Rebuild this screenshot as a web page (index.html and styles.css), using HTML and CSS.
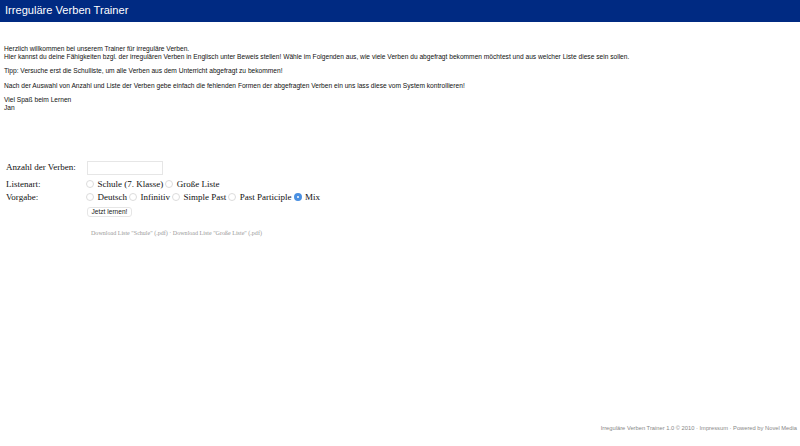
FILE: index.html
```html
<!DOCTYPE html>
<html lang="de">
<head>
    <meta charset="UTF-8">
    <title>Irreguläre Verben Trainer</title>
    <link rel="stylesheet" href="styles.css">
</head>
<body>
    <div class="header">Irreguläre Verben Trainer</div>
    <div class="intro">
        <p>Herzlich willkommen bei unserem Trainer für irreguläre Verben.<br>
        Hier kannst du deine Fähigkeiten bzgl. der irregulären Verben in Englisch unter Beweis stellen! Wähle im Folgenden aus, wie viele Verben du abgefragt bekommen möchtest und aus welcher Liste diese sein sollen.</p>
        <p>Tipp: Versuche erst die Schulliste, um alle Verben aus dem Unterricht abgefragt zu bekommen!</p>
        <p>Nach der Auswahl von Anzahl und Liste der Verben gebe einfach die fehlenden Formen der abgefragten Verben ein uns lass diese vom System kontrollieren!</p>
        <p>Viel Spaß beim Lernen<br>
        Jan</p>
    </div>
    <form class="trainer">
        <label class="count-label" for="count">Anzahl der Verben:</label>
        <div class="count-row">
            <input class="count-input" type="text" id="count">
        </div>

        <span class="field-label">Listenart:</span>
        <div class="options">
            <span class="radio"></span><span class="option">Schule (7. Klasse)</span>
            <span class="radio"></span><span class="option">Große Liste</span>
        </div>

        <span class="field-label">Vorgabe:</span>
        <div class="options">
            <span class="radio"></span><span class="option">Deutsch</span>
            <span class="radio"></span><span class="option">Infinitiv</span>
            <span class="radio"></span><span class="option">Simple Past</span>
            <span class="radio"></span><span class="option">Past Participle</span>
            <span class="radio checked"></span><span class="option">Mix</span>
        </div>

        <div class="actions">
            <button class="submit" type="button">Jetzt lernen!</button>
            <div class="downloads">Download Liste "Schule" (.pdf) · Download Liste "Große Liste" (.pdf)</div>
        </div>
    </form>
    <div class="footer">Irreguläre Verben Trainer 1.0 © 2010 · Impressum · Powered by Novel Media</div>
</body>
</html>
```

FILE: styles.css
```css
html, body {
    height: 100%;
}

body {
    display: flex;
    flex-direction: column;
    margin: 0;
    background: #ffffff;
    color: #111111;
    font-family: "Liberation Sans", Arial, sans-serif;
    font-size: 6.64px;
}

.header {
    flex: none;
    height: 22px;
    padding-left: 5px;
    background: #002a82;
    color: #ffffff;
    font-size: 11.1px;
    line-height: 20px;
}

.intro {
    padding: 23px 4px 0;
    line-height: 7.5px;
}

.intro p {
    margin: 0 0 7px;
}

.trainer {
    display: grid;
    grid-template-columns: 81px 1fr;
    align-items: center;
    margin-top: 41px;
    padding-left: 6px;
    color: #111111;
    font-family: "Liberation Serif", "Times New Roman", serif;
    font-size: 9px;
}

.count-label {
    padding-bottom: 2px;
}

.count-row {
    height: 18px;
}

.count-input {
    display: block;
    box-sizing: border-box;
    width: 76px;
    height: 14px;
    margin: 2px 0 0;
    padding: 0;
    border: 1px solid #e6e6e6;
    background: #ffffff;
}

.options {
    display: flex;
    align-items: center;
    height: 13px;
}

.radio {
    box-sizing: border-box;
    width: 8px;
    height: 8px;
    margin-left: -1px;
    margin-right: 3.5px;
    border: 1px solid #dcdcdc;
    border-radius: 50%;
    background: #ffffff;
}

.radio.checked {
    border: 3px solid #4a90e2;
}

.option {
    margin-right: 3px;
}

.actions {
    grid-column: 2;
    padding-top: 4px;
}

.submit {
    display: block;
    width: 45px;
    height: 9.5px;
    padding: 0;
    border: 1px solid #e6e6e6;
    border-radius: 3px;
    background: #ffffff;
    color: #222222;
    font-family: "Liberation Sans", Arial, sans-serif;
    font-size: 6.6px;
    line-height: 7.5px;
}

.downloads {
    margin-top: 13.5px;
    margin-left: 4px;
    color: #999999;
    font-size: 6.06px;
}

.footer {
    margin-top: auto;
    padding: 0 3px 15px 0;
    color: #888888;
    font-size: 5.75px;
    text-align: right;
}
```
